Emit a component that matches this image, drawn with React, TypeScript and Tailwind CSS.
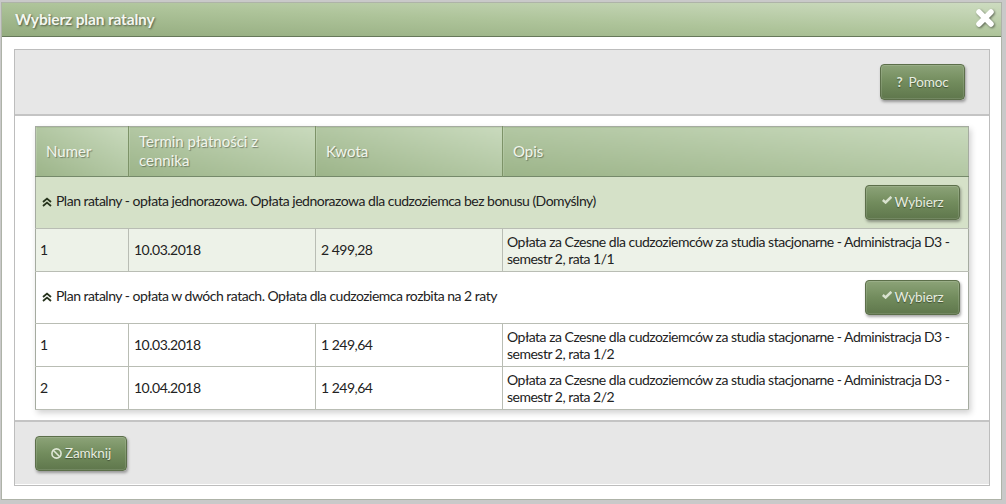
import { Ban } from "lucide-react";

const font = { fontFamily: "Lato, 'Noto Sans', sans-serif" };

const greenButton =
  "flex items-center justify-center rounded-[4px] border border-[#5c6f4a] bg-gradient-to-b from-[#8ca378] via-[#728c5d] to-[#5f774c] text-[13.5px] tracking-[-0.1px] text-[#e8eee0] shadow-[1px_2px_3px_rgba(0,0,0,0.35),inset_0_0_0_1px_rgba(255,255,255,0.12)] [text-shadow:0_1px_1px_rgba(0,0,0,0.4)]";

function ChevronsUp() {
  return (
    <svg width="10" height="10" viewBox="0 0 10 10" className="mr-[4px] mt-[2px] shrink-0" fill="none" stroke="#26331c" strokeWidth="1.8">
      <path d="M1 5 L5 1.6 L9 5" />
      <path d="M1 9 L5 5.6 L9 9" />
    </svg>
  );
}

function CheckGlyph() {
  return (
    <svg width="10" height="8" viewBox="0 0 10 8" className="mb-[5px]" fill="none" stroke="#d9e2cf" strokeWidth="2.6">
      <path d="M0.8 4 L3.6 6.4 L9.4 0.8" />
    </svg>
  );
}

function WybierzButton() {
  return (
    <button className={`${greenButton} h-[35px] w-[95px] gap-[3px]`}>
      <CheckGlyph />
      Wybierz
    </button>
  );
}

function GroupRow({ title, bg }: { title: string; bg: string }) {
  return (
    <tr className={bg}>
      <td colSpan={4} className="h-[52px] border-b border-[#b9bdb4] p-0">
        <div className="flex items-center justify-between pl-[6px] pr-[8px]">
          <div className="mb-[4px] flex items-center text-[14px] tracking-[-0.5px] text-[#222]">
            <ChevronsUp />
            {title}
          </div>
          <WybierzButton />
        </div>
      </td>
    </tr>
  );
}

function InstallmentRow({ no, date, amount, desc, bg }: { no: string; date: string; amount: string; desc: string; bg: string }) {
  const cell = "border-b border-r border-[#b9bdb4] align-middle text-[14px] tracking-[-0.5px] text-[#222]";
  return (
    <tr className={`h-[43px] ${bg}`}>
      <td className={`${cell} pb-[2px] pl-[4px] pr-[5px]`}>{no}</td>
      <td className={`${cell} pb-[2px] px-[5px]`}>{date}</td>
      <td className={`${cell} pb-[2px] px-[5px]`}>{amount}</td>
      <td className={`${cell} border-r-0 pl-[4px] pr-[5px] leading-[17px]`}>{desc}</td>
    </tr>
  );
}

export default function App() {
  const head =
    "border-r border-[#7d9368] bg-gradient-to-tr from-[#9cb489] to-[#c9dabd] px-[10px] text-left align-middle text-[15px] font-normal leading-[19px] text-[#f1f5ec] [text-shadow:1px_1px_1px_rgba(0,0,0,0.35)]";

  return (
    <div style={font} className="h-[504px] w-[1006px] overflow-hidden bg-[#c9c9c9] pl-[1px] pt-[2px]">
      <div className="h-[498px] w-[1001px] border border-[#aeb3a8] bg-white">
        <div className="flex h-[34px] items-center justify-between border-b border-[#66785a] bg-gradient-to-tr from-[#93ab7e] via-[#aec49a] to-[#cddcc0] pl-[13px] pr-[6px]">
          <span className="text-[15.5px] font-bold tracking-[-0.15px] text-[#f4f7f0] [text-shadow:1px_1px_2px_rgba(0,0,0,0.5)]">
            Wybierz plan ratalny
          </span>
          <svg width="20" height="20" viewBox="0 0 20 20" className="mt-[-3px] drop-shadow-[1px_1px_1px_rgba(0,0,0,0.5)]">
            <path d="M4 4 L16 16 M16 4 L4 16" stroke="#fff" strokeWidth="5.5" strokeLinecap="round" />
          </svg>
        </div>

        <div className="ml-[12px] mt-[12px] h-[437px] w-[976px] border border-[#bdbdbd] bg-white">
          <div className="flex h-[66px] items-center justify-end border-b-2 border-[#c4c4c4] bg-[#e7e7e7] pr-[24px]">
            <button className={`${greenButton} h-[36px] w-[85px] gap-[6px]`}>
              <span className="font-bold text-[#dfe7d6]">?</span>
              Pomoc
            </button>
          </div>

          <div className="pl-[20px] pt-[10px]">
            <table className="w-[933px] table-fixed border-collapse border border-[#a5aba0] shadow-[2px_3px_6px_rgba(0,0,0,0.18)]">
              <colgroup>
                <col className="w-[93px]" />
                <col className="w-[187px]" />
                <col className="w-[187px]" />
                <col className="w-[466px]" />
              </colgroup>
              <thead>
                <tr className="h-[50px] border-b border-[#75896a]">
                  <th className={head}>Numer</th>
                  <th className={`${head} pb-[2px]`}>Termin płatności z cennika</th>
                  <th className={head}>Kwota</th>
                  <th className={`${head} border-r-0`}>Opis</th>
                </tr>
              </thead>
              <tbody>
                <GroupRow bg="bg-[#d5e1c8]" title="Plan ratalny - opłata jednorazowa. Opłata jednorazowa dla cudzoziemca bez bonusu (Domyślny)" />
                <InstallmentRow
                  bg="bg-[#edf2e8]"
                  no="1"
                  date="10.03.2018"
                  amount="2 499,28"
                  desc="Opłata za Czesne dla cudzoziemców za studia stacjonarne - Administracja D3 - semestr 2, rata 1/1"
                />
                <GroupRow bg="bg-white" title="Plan ratalny - opłata w dwóch ratach. Opłata dla cudzoziemca rozbita na 2 raty" />
                <InstallmentRow
                  bg="bg-white"
                  no="1"
                  date="10.03.2018"
                  amount="1 249,64"
                  desc="Opłata za Czesne dla cudzoziemców za studia stacjonarne - Administracja D3 - semestr 2, rata 1/2"
                />
                <InstallmentRow
                  bg="bg-white"
                  no="2"
                  date="10.04.2018"
                  amount="1 249,64"
                  desc="Opłata za Czesne dla cudzoziemców za studia stacjonarne - Administracja D3 - semestr 2, rata 2/2"
                />
              </tbody>
            </table>
          </div>

          <div className="mt-[10px] h-[64px] border-t-2 border-[#c4c4c4] bg-[#e7e7e7] pl-[20px] pt-[14px]">
            <button className={`${greenButton} h-[35px] w-[92px] gap-[3px]`}>
              <Ban size={11} strokeWidth={3.5} className="text-[#dfe7d6]" />
              Zamknij
            </button>
          </div>
        </div>
      </div>
    </div>
  );
}
